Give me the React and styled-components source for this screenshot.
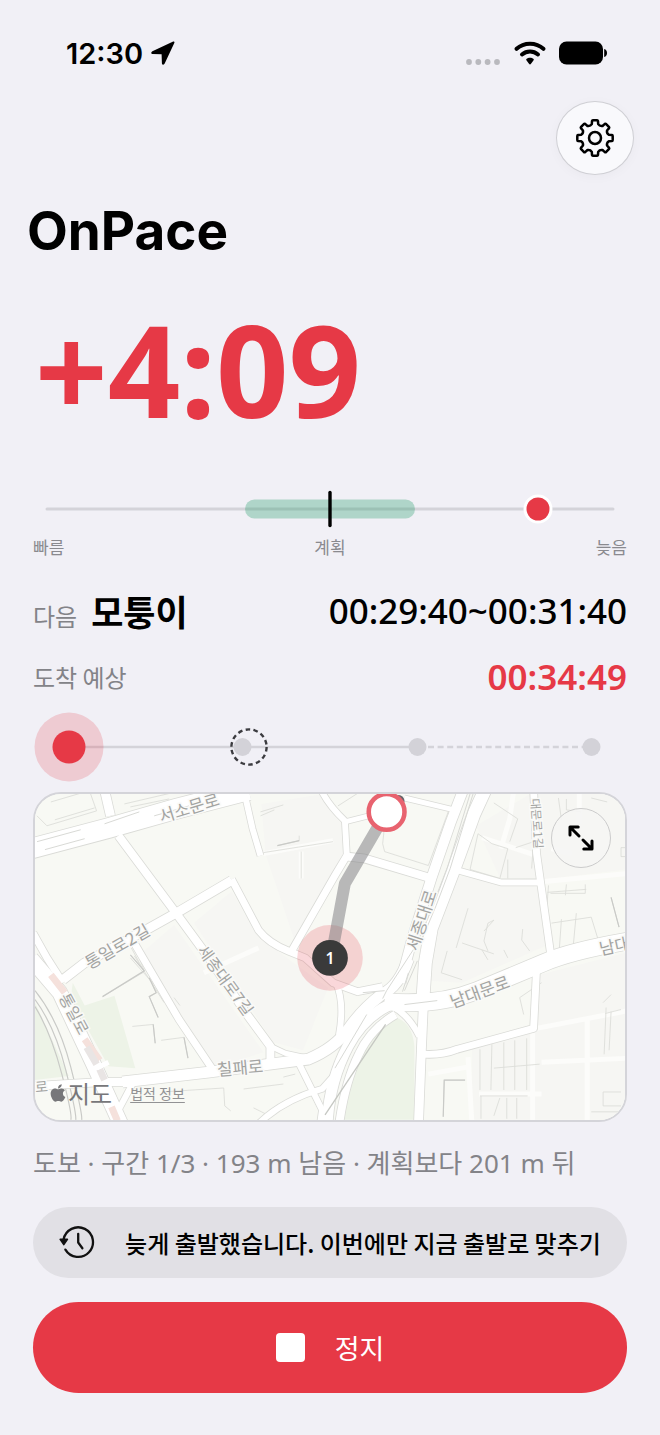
import React from "react";
import styled, { createGlobalStyle } from "styled-components";
import { FaApple } from "react-icons/fa";

const RED = "#e63946";
const KOREAN = `"Noto Sans CJK KR", sans-serif`;
const NUMERIC = `"Noto Sans", "Noto Sans CJK KR", sans-serif`;

const GlobalStyle = createGlobalStyle`
  * {
    box-sizing: border-box;
  }

  body {
    margin: 0;
    background: #f1f0f6;
    color: #000;
    font-family: ${KOREAN};
  }

  button {
    font: inherit;
    color: inherit;
    cursor: pointer;
  }

  svg {
    display: block;
    flex-shrink: 0;
  }
`;

const Screen = styled.main`
  padding: 34px 33px 42px;
`;

const StatusBar = styled.div`
  display: flex;
  align-items: center;
  justify-content: space-between;
  height: 38px;
  padding: 0 19px 0 33px;
`;

const StatusGroup = styled.div`
  display: flex;
  align-items: center;
  gap: ${({ $gap }) => $gap}px;
`;

const Clock = styled.span`
  font-family: Inter, sans-serif;
  font-size: 29px;
  font-weight: 600;
`;

const Toolbar = styled.div`
  display: flex;
  justify-content: flex-end;
  margin: 29px -7px 0 0;
`;

const SettingsButton = styled.button`
  display: grid;
  place-items: center;
  width: 78px;
  height: 74px;
  padding: 0;
  border: 1px solid #cfcfd4;
  border-radius: 50%;
  background: #f9f9fc;
  box-shadow: 0 2px 12px rgba(0, 0, 0, 0.03);
`;

const Title = styled.h1`
  margin: 24px 0 0 -6px;
  font-family: Inter, sans-serif;
  font-size: 53px;
  font-weight: 700;
  line-height: 64px;
`;

const Delta = styled.div`
  margin: 36px 0 50px;
  padding-left: 2px;
  color: ${RED};
  font-family: ${NUMERIC};
  font-size: 127px;
  font-weight: 700;
  line-height: 140px;
`;

const Drawing = styled.svg`
  width: 100%;
  height: auto;
`;

const ScaleLabels = styled.div`
  display: flex;
  justify-content: space-between;
  margin-top: 6px;
  color: #8a8a8f;
  font-size: 17px;
  line-height: 24px;
`;

const InfoRow = styled.div`
  display: flex;
  align-items: center;
  justify-content: space-between;
  height: ${({ $tall }) => ($tall ? 48 : 36)}px;
  margin-top: ${({ $tall }) => ($tall ? 28 : 24)}px;
`;

const InfoName = styled.div`
  display: flex;
  align-items: baseline;
  gap: 14px;
`;

const Label = styled.span`
  color: #838388;
  font-size: 24px;
  line-height: 36px;
`;

const Waypoint = styled.strong`
  font-size: 35px;
  font-weight: 700;
  line-height: 44px;
`;

const Time = styled.span`
  color: ${({ $late }) => ($late ? RED : "#000")};
  font-family: ${NUMERIC};
  font-size: 35px;
  font-weight: ${({ $late }) => ($late ? 600 : 500)};
  line-height: 36px;
`;

const Steps = styled.div`
  margin: 16px 0 9px;
`;

const MapFrame = styled.section`
  position: relative;
  overflow: hidden;
  border: 2px solid #d4d4d9;
  border-radius: 28px;
  background: #f8f8f4;
`;

const ExpandButton = styled.button`
  position: absolute;
  top: 14px;
  right: 14px;
  display: grid;
  place-items: center;
  width: 60px;
  height: 60px;
  padding: 0;
  border: 1px solid #cbcbcb;
  border-radius: 50%;
  background: rgba(245, 245, 244, 0.92);
`;

const Attribution = styled.div`
  position: absolute;
  left: 13px;
  bottom: 11px;
  display: flex;
  align-items: center;
  gap: 18px;
  color: #77777a;
`;

const MapBrand = styled.span`
  display: flex;
  align-items: center;
  font-size: 24px;
  line-height: 32px;
`;

const LegalLink = styled.a`
  color: #929294;
  font-size: 14px;
  line-height: 24px;
  text-underline-offset: 3px;
`;

const Summary = styled.p`
  margin: 23px 0 26px;
  color: #838388;
  font-family: ${NUMERIC};
  font-size: 26px;
  line-height: 36px;
  white-space: nowrap;
`;

const Actions = styled.div`
  display: flex;
  flex-direction: column;
  gap: 24px;
`;

const ActionButton = styled.button`
  display: flex;
  align-items: center;
  justify-content: center;
  gap: 30px;
  width: 100%;
  border: 0;
  border-radius: 46px;
  white-space: nowrap;
`;

const LateButton = styled(ActionButton)`
  height: 71px;
  padding: 0 26px;
  background: #e1e0e5;
  font-size: 24px;
  font-weight: 500;
`;

const StopButton = styled(ActionButton)`
  height: 91px;
  background: ${RED};
  color: #fff;
  font-size: 27px;
`;

const StopSquare = styled.span`
  width: 29px;
  height: 29px;
  border-radius: 4px;
  background: #fff;
`;

const polar = (radius, degrees) => {
  const a = (degrees * Math.PI) / 180;
  return `${(radius * Math.sin(a)).toFixed(2)} ${(-radius * Math.cos(a)).toFixed(2)}`;
};

const gearPath =
  Array.from({ length: 8 }, (_, i) => {
    const a = i * 45;
    return `${i ? "L" : "M"}${polar(14.2, a - 13)} L${polar(17.2, a - 10)} Q${polar(18, a - 9)} ${polar(17.8, a - 6)} L${polar(17.8, a + 6)} Q${polar(18, a + 9)} ${polar(17.2, a + 10)} L${polar(14.2, a + 13)} Q${polar(12.4, a + 22.5)} ${polar(14.2, a + 32)}`;
  }).join(" ") + "Z";

const GearIcon = () => (
  <svg width="42" height="42" viewBox="-21 -21 42 42" fill="none" stroke="#000" strokeWidth="2.5" strokeLinejoin="round">
    <path d={gearPath} />
    <circle r="6" />
  </svg>
);

const LocationIcon = () => (
  <svg width="24" height="24" viewBox="0 0 24 24">
    <path d="M22.2 .6 1.4 10.2C-.2 11-.1 13 1.7 13.1L10.6 13.3 10.9 22.2C11 24 13 24.2 13.7 22.6L23.3 1.9C23.8 .8 23.2 .2 22.2 .6Z" />
  </svg>
);

const SignalIcon = () => (
  <svg width="36" height="24" viewBox="0 0 36 24" fill="#b9b9be">
    {[4, 13.3, 22.6, 32].map((x) => (
      <circle key={x} cx={x} cy="21" r="2.9" />
    ))}
  </svg>
);

const WifiIcon = () => (
  <svg width="32" height="24" viewBox="0 0 32 24" fill="none" stroke="#000" strokeWidth="4" strokeLinecap="round">
    <path d="M2.6 7.8C10 1 22 1 29.4 7.8" />
    <path d="M8 13.4C12.6 9.4 19.4 9.4 24 13.4" />
    <path d="M12.4 18C14.3 16.2 17.7 16.2 19.6 18Q20.2 18.8 19.4 19.6L17 22.8Q16 24 15 22.8L12.6 19.6Q11.8 18.8 12.4 18Z" fill="#000" stroke="none" />
  </svg>
);

const BatteryIcon = () => (
  <svg width="49" height="24" viewBox="0 0 49 24">
    <rect width="44" height="23" y=".5" rx="7.5" />
    <path d="M45.2 8C49 9 49 15 45.2 16Z" />
  </svg>
);

const HistoryIcon = () => (
  <svg width="36" height="34" viewBox="0 0 36 34" fill="none" stroke="#111" strokeWidth="2.3" strokeLinecap="round" strokeLinejoin="round">
    <path d="M4.6 14.5A14.8 14.8 0 1 1 6.4 24.6" />
    <path d="M19.2 8.8V17.5L23.4 23.2" />
    <path d="M1.2 14.4H8.4L4.8 19.6Z" fill="#111" strokeWidth="1.6" />
  </svg>
);

const ExpandIcon = () => (
  <svg width="28" height="28" viewBox="0 0 28 28" fill="none" stroke="#000" strokeWidth="3" strokeLinecap="round" strokeLinejoin="round">
    <path d="M12 12 3.5 3.5M3 11V3H11.2" />
    <path d="M16 16 24.5 24.5M25 17V25H16.8" />
  </svg>
);

const PaceScale = () => (
  <Drawing viewBox="0 0 594 40" role="img" aria-label="계획보다 늦음">
    <path d="M14 20H580" stroke="#d4d3d9" strokeWidth="3" strokeLinecap="round" />
    <rect x="212" y="10.5" width="170" height="19" rx="9.5" fill="rgba(42, 157, 110, 0.33)" />
    <path d="M297 3.5V36.5" stroke="#000" strokeWidth="3.4" strokeLinecap="round" />
    <circle cx="505" cy="20" r="14.5" fill="#fff" />
    <circle cx="505" cy="20" r="11.5" fill={RED} />
  </Drawing>
);

const StepTrack = () => (
  <Drawing viewBox="0 0 594 72" role="img" aria-label="구간 1/3">
    <path d="M36 36H384" stroke="#d4d3d9" strokeWidth="2.6" />
    <path d="M395 36H551" stroke="#d4d3d9" strokeWidth="2.4" strokeDasharray="6 3.6" />
    <circle cx="36" cy="36" r="34.5" fill="rgba(230, 57, 70, 0.2)" />
    <circle cx="36" cy="36" r="16.5" fill={RED} />
    {[209.5, 384.5, 558.5].map((x) => (
      <circle key={x} cx={x} cy="36" r="9" fill="#d3d2d8" />
    ))}
    <circle cx="216" cy="36" r="17.6" fill="none" stroke="#3c3c40" strokeWidth="2.4" strokeDasharray="4.6 3.3" />
  </Drawing>
);

const roads = [
  { w: 7, d: "M97 145 104 157 145 227 182 282" },
  { w: 9, d: "M70 -4 76 22" },
  { w: 8, d: "M84 42 142 120 175 165 212 220 237 254V270" },
  { w: 5, d: "M237 254 252 261 275 266" },
  { w: 9, d: "M198 87 142 120 115 135 50 170 28 187" },
  { w: 7, d: "M198 86 225 137Q235 150 255 158L272 165 300 190 325 199 350 194" },
  { w: 7, d: "M259 157 302 82 314 62" },
  { w: 6, d: "M288 -4Q296 12 312 27L314 63" },
  { w: 8, d: "M314 63 332 65 399 85" },
  { w: 5, d: "M312 28 340 21" },
  { w: 5, d: "M372 4 422 16" },
  { w: 6, d: "M212 4 219 35 227 62" },
  { w: 6, d: "M422 76 469 89H509" },
  { w: 7, d: "M502 -4 505 60 519 160" },
  { w: 7, d: "M392 262Q410 263 425 257L502 236 505 175" },
  { w: 6, d: "M303 190Q312 210 306 243" },
  { w: 6, d: "M265 270 289 318 287 332" },
  { w: 6, d: "M225 332Q250 308 289 297L306 278" },
  { w: 8, d: "M0 294 68 290H92" },
  { w: 6, d: "M98 292 82 322" },
  { w: 7, d: "M-2 140 12 165 28 190" },
  { w: 20, d: "M-4 55 75 34 142 15 215 -4" },
  { w: 15, d: "M-4 166 25 200 58 270 87 334" },
  { w: 11, d: "M88 290 175 280 275 267Q302 256 316 236T350 201Q366 194 376 166" },
  { w: 11, d: "M294 334Q296 290 315 254T369 208L400 206" },
  { w: 8, d: "M306 334Q312 290 326 262 338 236 363 222" },
  { w: 6, d: "M360 214Q376 222 387 244" },
  { w: 10, d: "M431 -4 418 30 399 85 380 145 368 190" },
  { w: 13, d: "M453 -4 442 20 422 75 399 135 393 170 390 215" },
  { w: 9, d: "M392 190 389 257 386 334" },
  { w: 17, d: "M352 209Q405 214 445 198L512 170Q540 158 598 148" },
];

const buildings = [
  "M2 22 12 32 62 17 56 0M16 8 50 -2M20 26 60 14",
  "M90 10 150 -4M96 13 135 5M227 22 241 16M227 18 250 11M244 52 266 47V42M230 59 300 48M268 58V85",
  "M68 204 110 179 97 155M100 152 110 178M115 185 122 200 115 204 124 225M98 234 119 232 121 251M127 248 150 245 154 266",
  "M128 300 190 296 191 314 197 319M210 297 250 292M250 285 262 282M220 316 236 324",
  "M305 12 330 -4M355 4 350 50 352 58 396 72 416 18",
  "M446 40 438 76 468 85 476 55 460 50ZM462 9 486 25 478 48M500 75 502 48 484 54M476 66V85",
  "M436 115 424 155M430 150 462 161M452 138 462 127 456 130 452 148 456 158M491 136 490 147 498 158",
  "M517 92 515 118M535 91 534 102M516 99 555 96M519 100H554V91M580 104 588 134M530 126 528 155M545 120 542 152M520 130 560 124 568 150",
  "M527 4 530 26M535 5V16L550 18M560 4 576 8M590 54H594M590 54V63H594",
  "M415 158 409 180 430 187M450 157 456 167M472 157 476 165",
  "M488 205 510 190M488 205 492 222M575 215 573 262M580 219 578 258M574 221 590 217M572 210 580 202",
  "M411 325 412 288H433M448 257V298M460 252 459 298M472 250V298M483 248V298M495 246V298M462 276 508 272M449 304V327M468 306 462 324M475 306V327M485 306V327M448 304H496M572 314V300H590M572 314H590M560 320H594",
  "M96 165 145 220M100 163 130 210M140 205 146 213M6 48 50 36M2 61 30 53",
];

const minorRoads = [
  "M482 -4 478 25 469 55M450 44 505 62M513 88 598 80M520 55 540 60M548 -4V30",
  "M505 236 598 218M501 240V334M447 302H510M510 270 598 266M556 225V334M436 265 440 334",
  "M230 60 300 47M268 58V85M170 180 225 155M396 282 435 275",
];

const districts = [
  "M160 130 198 98 222 140 255 166 295 195 270 258 240 250Z",
  "M105 162 140 132 230 260 180 276Z",
  "M444 32 502 -2 594 -2V76L513 86 468 84Z",
  "M402 145 424 82 510 94 516 152 430 190 396 188Z",
  "M508 182 594 160V328H440V252L502 240Z",
  "M228 10 290 0 310 30 310 60 262 150 232 60Z",
];

const mapLabels = [
  { x: 157, y: 20, turn: -17, size: 17, text: "서소문로" },
  { x: 86, y: 159, turn: -30, size: 17, text: "통일로2길" },
  { x: 187, y: 191, turn: 54, size: 16, text: "세종대로7길" },
  { x: 34, y: 224, turn: 62, size: 16, text: "통일로" },
  { x: 207, y: 282, turn: -5, size: 17, text: "칠패로" },
  { x: 395, y: 129, turn: -72, size: 17, text: "세종대로" },
  { x: 450, y: 205, turn: -20, size: 17, text: "남대문로" },
  { x: 585, y: 159, turn: -12, size: 17, text: "남대" },
  { x: 501, y: 30, turn: 86, size: 12, text: "대문로1길" },
  { x: 7, y: 300, turn: -5, size: 14, text: "로" },
];

const MapDrawing = () => (
  <Drawing viewBox="0 0 594 328" role="img" aria-label="경로 지도">
    <rect width="594" height="328" fill="#f8f9f4" />
    <g fill="#f6f6f3">
      {districts.map((d) => (
        <path key={d} d={d} />
      ))}
    </g>
    <g fill="#edf3e7">
      <path d="M38 190 50 213 80 203 101 276 74 274 36 206Z" />
      <path d="M0 210 34 284 0 288Z" />
      <path d="M310 328Q318 270 338 244 350 228 366 226 380 232 382 254V328Z" />
    </g>
    <g fill="none" stroke="#fcfcfa" strokeWidth="5">
      {minorRoads.map((d) => (
        <path key={d} d={d} />
      ))}
    </g>
    <g fill="none" stroke="#dcddd9" strokeWidth="0.9">
      {buildings.map((d) => (
        <path key={d} d={d} />
      ))}
    </g>
    <g fill="none" stroke="#c9cac7" strokeWidth="1.2">
      <path d="M96 162 110 178 68 204M115 185 122 200 115 204 124 225M119 232 121 251M150 245 154 266M244 52 266 47M411 325 412 288H433M580 104 588 134" />
      <path d="M0 198Q24 228 36 275T47 328M0 207Q20 234 31 278T41 328M0 214Q16 240 27 282T36 328" />
    </g>
    <g fill="none" strokeLinejoin="round">
      {roads.map(({ w, d }) => (
        <path key={d} d={d} stroke="#dadbd7" strokeWidth={w + 1.6} />
      ))}
      {roads.map(({ w, d }) => (
        <path key={d} d={d} stroke="#fff" strokeWidth={w} />
      ))}
    </g>
    <g fill="none" stroke="#d8d9d5" strokeWidth="1">
      <path d="M2 48 46 36M10 56 50 45M70 30 105 18M120 22 155 12" />
      <path d="M438 0 415 75 402 110 384 152 354 198 350 206M441 0 418 75 404 112 388 150M302 276 334 222" />
      <path d="M376 180 370 199M385 168 372 198M330 200 352 198M372 212 405 208" />
      <path d="M353 232 292 323" stroke="#c5c7c2" strokeWidth="1.3" />
    </g>
    <g fill="none" stroke="#f5e1dc" strokeWidth="7">
      <path d="M16 182 30 200M50 247 65 268M77 315 83 329" />
      <path d="M52 255 62 272M65 277 70 288" stroke="#e9e5e4" />
    </g>
    <path d="M62 276 74 270" stroke="#fff" strokeWidth="5" />

    <g fill="#a3a4a2" stroke="#fafaf8" strokeWidth="3" paintOrder="stroke" textAnchor="middle" fontFamily="Noto Sans CJK KR, sans-serif">
      {mapLabels.map(({ x, y, turn, size, text }) => (
        <text key={text} transform={`translate(${x} ${y}) rotate(${turn})`} fontSize={size}>
          {text}
        </text>
      ))}
    </g>

    <circle cx="297" cy="165" r="33" fill="rgba(230, 57, 70, 0.2)" />
    <path d="M354 18 312 90 299 160" fill="none" stroke="rgba(120, 120, 124, 0.5)" strokeWidth="12" strokeLinejoin="round" />
    <circle cx="366" cy="7" r="6" fill="#66666a" />
    <circle cx="354" cy="18" r="18" fill="#fff" stroke="#e8636f" strokeWidth="4.6" />
    <circle cx="297" cy="165" r="18" fill="#3a3a3a" />
    <text x="297" y="171" fill="#fff" fontFamily="Noto Sans, sans-serif" fontSize="16" fontWeight="600" textAnchor="middle">
      1
    </text>
  </Drawing>
);

const App = () => {
  return (
    <>
      <GlobalStyle />
      <Screen>
        <StatusBar>
          <StatusGroup $gap={8}>
            <Clock>12:30</Clock>
            <LocationIcon />
          </StatusGroup>
          <StatusGroup $gap={13}>
            <SignalIcon />
            <WifiIcon />
            <BatteryIcon />
          </StatusGroup>
        </StatusBar>

        <Toolbar>
          <SettingsButton aria-label="설정">
            <GearIcon />
          </SettingsButton>
        </Toolbar>

        <Title>OnPace</Title>
        <Delta>+4:09</Delta>

        <PaceScale />
        <ScaleLabels>
          <span>빠름</span>
          <span>계획</span>
          <span>늦음</span>
        </ScaleLabels>

        <InfoRow $tall>
          <InfoName>
            <Label>다음</Label>
            <Waypoint>모퉁이</Waypoint>
          </InfoName>
          <Time>00:29:40~00:31:40</Time>
        </InfoRow>
        <InfoRow>
          <Label>도착 예상</Label>
          <Time $late>00:34:49</Time>
        </InfoRow>

        <Steps>
          <StepTrack />
        </Steps>

        <MapFrame>
          <MapDrawing />
          <ExpandButton aria-label="지도 확대">
            <ExpandIcon />
          </ExpandButton>
          <Attribution>
            <MapBrand>
              <FaApple size={20} />
              지도
            </MapBrand>
            <LegalLink href="#legal">법적 정보</LegalLink>
          </Attribution>
        </MapFrame>

        <Summary>도보 · 구간 1/3 · 193 m 남음 · 계획보다 201 m 뒤</Summary>

        <Actions>
          <LateButton>
            <HistoryIcon />
            늦게 출발했습니다. 이번에만 지금 출발로 맞추기
          </LateButton>
          <StopButton>
            <StopSquare />
            정지
          </StopButton>
        </Actions>
      </Screen>
    </>
  );
};

export default App;
